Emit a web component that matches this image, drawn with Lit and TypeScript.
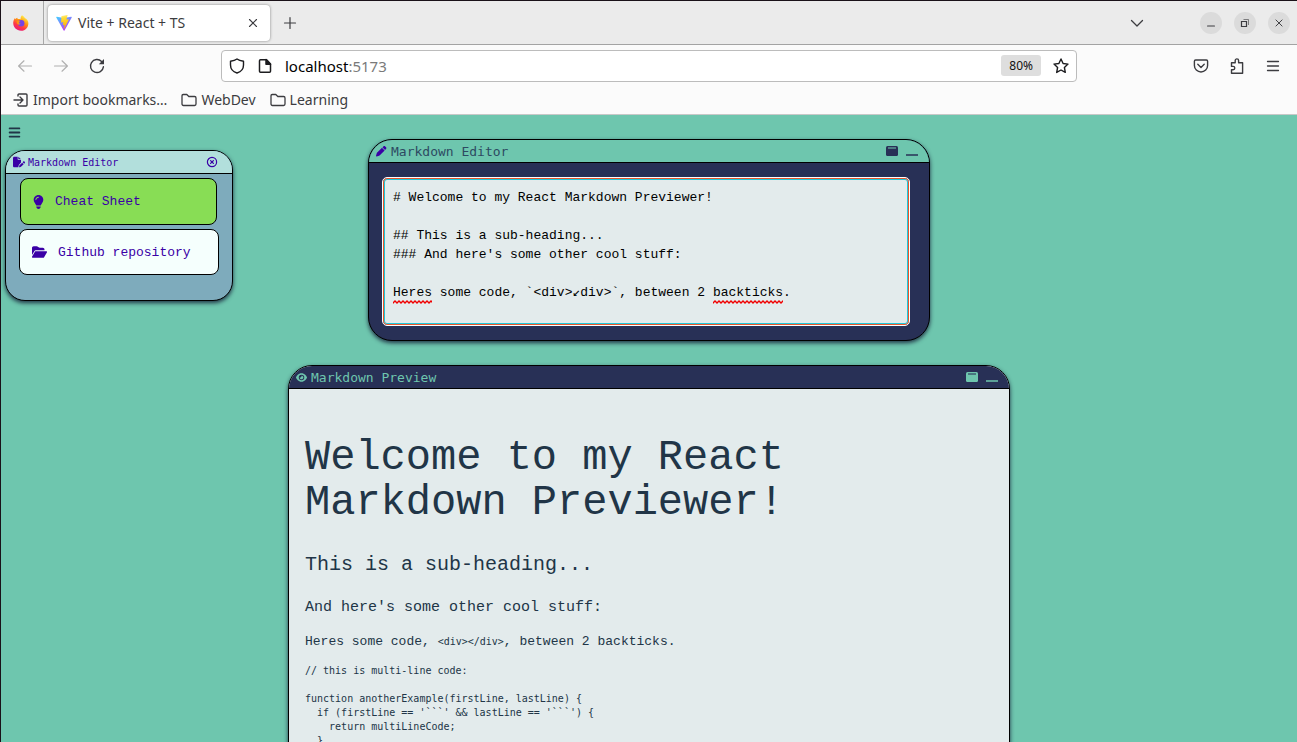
import { LitElement, html, css, svg } from "lit";
import { customElement, state } from "lit/decorators.js";

const UI = css`"Noto Sans", "Open Sans", sans-serif`;
const MONO = css`"Liberation Mono", "DejaVu Sans Mono", monospace`;
const BAR_MONO = css`"DejaVu Sans Mono", "Liberation Mono", monospace`;

const line = (d: string, box = 16, w = 1.3) => html`
  <svg viewBox="0 0 ${box} ${box}" fill="none" stroke="currentColor" stroke-width=${w}
    stroke-linecap="round" stroke-linejoin="round" aria-hidden="true"><path d=${d}></path></svg>`;
const solid = (d: string, vb: string) => html`
  <svg viewBox=${vb} fill="currentColor" aria-hidden="true"><path d=${d}></path></svg>`;

const icons = {
  close: line("M4.500 4.500l7 7M11.500 4.500l-7 7", 16, 1.1),
  plus: line("M8 2.5v11M2.5 8h11", 16, 1.2),
  chevron: line("M2.5 5.5L8 11l5.5-5.5", 16, 1.3),
  back: line("M14.500 8H1.800M7 2.800L1.600 8 7 13.200", 16, 1.2),
  forward: line("M1.500 8h12.700M9 2.800L14.400 8 9 13.200", 16, 1.2),
  reload: html`<svg viewBox="0 0 16 16" fill="none" stroke="currentColor" stroke-width="1.4" stroke-linecap="round" aria-hidden="true">
    <path d="M14.400 8.800A6.500 6.500 0 1 1 12.600 3.500L14 5"></path>
    <path d="M15 1v5.200H9.800z" fill="currentColor" stroke="none"></path></svg>`,
  shield: line("M8 1C6 2.500 3.500 3 1.500 3.300V7c0 4 2.500 6.800 6.500 8 4-1.200 6.500-4 6.500-8V3.300C12.500 3 10 2.500 8 1z", 16, 1.4),
  page: html`<svg viewBox="0 0 16 16" fill="none" stroke="currentColor" stroke-width="1.5" stroke-linejoin="round" aria-hidden="true">
    <path d="M3.500 1.800h6L13.500 6v7.200a1 1 0 0 1-1 1h-9a1 1 0 0 1-1-1V2.800a1 1 0 0 1 1-1z"></path>
    <path d="M9 1.500v4.800h4.500z" fill="currentColor"></path></svg>`,
  star: line("M8 1l2.100 4.500 4.900.600-3.600 3.400.900 4.900L8 12l-4.300 2.400.900-4.900L1 6.100l4.900-.600z", 16, 1.4),
  pocket: html`<svg viewBox="0 0 16 16" fill="none" stroke="currentColor" stroke-width="1.400" stroke-linecap="round" stroke-linejoin="round" aria-hidden="true">
    <path d="M2.600 2h10.800a1.200 1.200 0 0 1 1.200 1.200v4.200a6.600 6.600 0 0 1-13.200 0V3.200A1.200 1.200 0 0 1 2.600 2z"></path>
    <path d="M4.800 6.300L8 9.400l3.200-3.100"></path></svg>`,
  puzzle: line("M2.500 4.800h3.700V2.600a1.700 1.700 0 0 1 3.400 0v2.200h4v10.400H2.500v-3.400h1.600a1.600 1.600 0 0 0 0-3.400H2.500z", 16, 1.400),
  menu: line("M2.500 3.500h11M2.500 8h11M2.500 12.500h11", 16, 1.300),
  importIn: line("M1 8h9M7 5l3 3-3 3M5 4V3a1 1 0 0 1 1-1h7a1 1 0 0 1 1 1v10a1 1 0 0 1-1 1H6a1 1 0 0 1-1-1v-1", 16, 1.400),
  folder: line("M2.200 2.500h3.600l2 2h5.800a1.400 1.400 0 0 1 1.400 1.400v6.200a1.400 1.400 0 0 1-1.400 1.400H2.400A1.400 1.400 0 0 1 1 12.100V3.800a1.300 1.300 0 0 1 1.200-1.300z", 16, 1.300),
  bars: line("M2 3h12M2 8h12M2 13h12", 16, 2.200),
  winMin: line("M4 11.500h8", 16, 1.200),
  winRestore: html`<svg viewBox="0 0 14 14" fill="none" stroke="currentColor" aria-hidden="true">
    <path d="M3.500 5.500h5v5h-5z" stroke-width="1.200"></path><path d="M5.500 3.500h5v5.500" stroke-width="1" opacity=".6"></path></svg>`,
  pencil: solid("M410.300 231l11.300-11.300-33.900-33.900-62.100-62.100L291.700 89.800l-11.300 11.300-22.600 22.600L58.600 322.900c-10.400 10.400-18 23.300-22.200 37.400L1 480.700c-2.500 8.400-.200 17.500 6.100 23.700s15.300 8.500 23.700 6.100l120.300-35.400c14.100-4.200 27-11.800 37.400-22.200L387.700 253.700 410.300 231zM362.700 18.700L348.300 33.200 325.700 55.800 314.300 67.100l33.900 33.900 62.100 62.100 33.900 33.900 11.300-11.300 22.600-22.600 14.500-14.500c25-25 25-65.500 0-90.500L453.300 18.700c-25-25-65.500-25-90.500 0z", "0 0 540 540"),
  filePen: solid("M0 64C0 28.700 28.700 0 64 0H224V128c0 17.700 14.300 32 32 32H384V285.700l-86.800 86.800c-10.300 10.300-17.500 23.100-21 37.200l-18.700 74.900c-2.300 9.200-1.800 18.800 1.300 27.500H64c-35.300 0-64-28.700-64-64V64zm384 64H256V0L384 128zM549.800 235.700l14.400 14.400c15.600 15.600 15.600 40.900 0 56.600l-29.400 29.400-71-71 29.400-29.400c15.600-15.600 40.900-15.600 56.600 0zM311.900 417L441.100 287.800l71 71L382.900 487.900c-4.100 4.100-9.200 7-14.900 8.400l-60.100 15c-5.500 1.400-11.200-.200-15.200-4.200s-5.600-9.700-4.200-15.200l15-60.100c1.400-5.600 4.300-10.800 8.400-14.900z", "0 0 576 512"),
  bulb: solid("M272 384c9.600-31.900 29.500-59.100 49.200-86.200c5.200-7.100 10.400-14.200 15.400-21.400c19.800-28.500 31.400-63 31.400-100.300C368 78.800 289.200 0 192 0S16 78.800 16 176c0 37.300 11.600 71.900 31.400 100.300c5 7.200 10.200 14.300 15.400 21.400c19.800 27.100 39.700 54.400 49.200 86.200H272zM192 512c44.200 0 80-35.800 80-80V416H112v16c0 44.200 35.800 80 80 80zM112 176c0 8.800-7.200 16-16 16s-16-7.200-16-16c0-61.900 50.100-112 112-112c8.800 0 16 7.200 16 16s-7.200 16-16 16c-44.200 0-80 35.800-80 80z", "0 0 384 512"),
  folderOpen: solid("M88.700 223.800L0 375.800V96C0 60.700 28.700 32 64 32H181.500c17 0 33.300 6.700 45.300 18.700l26.500 26.500c12 12 28.300 18.700 45.300 18.700H416c35.300 0 64 28.700 64 64v32H144c-22.800 0-43.800 12.100-55.300 31.800zm27.600 16.100C122.100 230 132.600 224 144 224H544c11.500 0 22 6.100 27.700 16.100s5.700 22.200-.100 32.100l-112 192C453.900 474 443.400 480 432 480H32c-11.500 0-22-6.100-27.700-16.100s-5.700-22.200 .100-32.100l112-192z", "0 0 576 512"),
  eye: html`<svg viewBox="0 0 576 512" aria-hidden="true"><path fill="currentColor" fill-rule="evenodd" d="M288 32c-80.800 0-145.500 36.800-192.600 80.600C48.600 156 17.300 208 2.500 243.700c-3.300 7.900-3.300 16.700 0 24.600C17.300 304 48.600 356 95.400 399.400C142.500 443.200 207.200 480 288 480s145.500-36.800 192.600-80.600c46.800-43.500 78.100-95.400 93-131.100c3.300-7.900 3.300-16.700 0-24.600c-14.900-35.700-46.200-87.700-93-131.100C433.500 68.800 368.800 32 288 32zM144 256a144 144 0 1 1 288 0 144 144 0 1 1-288 0zm144-64c0 35.300-28.700 64-64 64c-7.100 0-13.900-1.200-20.300-3.300c-5.500-1.800-11.900 1.600-11.700 7.400c.300 6.900 1.300 13.800 3.200 20.700c13.700 51.200 66.400 81.600 117.600 67.900s81.600-66.400 67.900-117.600c-11.100-41.500-47.800-69.400-88.600-71.100c-5.800-.200-9.200 6.100-7.400 11.700c2.100 6.400 3.300 13.200 3.300 20.300z"></path></svg>`,
  maximize: html`<svg viewBox="0 0 12 12" aria-hidden="true"><rect x="0" y="1" width="12" height="10" rx="1.500" fill="currentColor"></rect><path d="M2 3h8" stroke="var(--bar)" stroke-width="1.500" opacity=".7"></path></svg>`,
  minimize: html`<svg viewBox="0 0 12 12" aria-hidden="true"><path d="M0 10h12" stroke="currentColor" stroke-width="1.500"></path></svg>`,
  circleX: html`<svg viewBox="0 0 12 12" fill="none" stroke="currentColor" stroke-width="1.200" stroke-linecap="round" aria-hidden="true"><circle cx="6" cy="6" r="4.600"></circle><path d="M4.600 4.600l2.800 2.800M7.400 4.600L4.600 7.400"></path></svg>`,
  vite: html`<svg viewBox="0 0 32 32" aria-hidden="true"><defs>
      <linearGradient id="va" x1="0" y1="0" x2=".6" y2="1"><stop offset="0" stop-color="#41d1ff"></stop><stop offset="1" stop-color="#bd34fe"></stop></linearGradient>
      <linearGradient id="vb" x1=".5" y1="0" x2=".6" y2="1"><stop offset="0" stop-color="#ffea83"></stop><stop offset=".2" stop-color="#ffdd35"></stop><stop offset="1" stop-color="#ffa800"></stop></linearGradient></defs>
    <path fill="url(#va)" d="M31.500 5L17 31a1 1 0 0 1-1.600 0L.500 5c-.400-.800.300-1.500 1.100-1.400L16 6.200l14.300-2.600c.800-.100 1.600.700 1.200 1.400z"></path>
    <path fill="url(#vb)" d="M22.500 0L11.500 2c-.400.100-.600.300-.600.600L10.200 14.500c0 .400.300.600.700.500l3.100-.700c.400-.100.800.300.700.700l-.900 4.500c-.100.500.300.800.700.700l1.900-.600c.500-.100.900.300.700.700l-1.400 6.600c-.100.700.600.900.900.400l8.800-18c.200-.400-.100-.800-.600-.700l-3.200.600c-.400.100-.700-.300-.600-.700l2.100-7.800c.100-.400-.200-.800-.600-.700z"></path></svg>`,
  firefox: html`<svg viewBox="0 0 16 16" aria-hidden="true"><defs>
      <linearGradient id="fa" x1=".8" y1="0" x2=".25" y2="1"><stop offset=".05" stop-color="#fff44f"></stop><stop offset=".4" stop-color="#ff980e"></stop><stop offset=".7" stop-color="#ff3647"></stop><stop offset="1" stop-color="#e31587"></stop></linearGradient></defs>
    <path fill="url(#fa)" d="M9 .300c1.700.900 2.500 2 3 3 1.200.300 2.200 1.300 2.900 2.600 1.700 4.400-1.300 9.800-6.800 9.900C3 15.800-.300 11.500.300 7 .500 5.300 1.200 4 2 3l.300 1.300C3 3.300 3.600 3 4.300 2.700l.400 1.400c1-.200 1.900-.200 2.900.100C7.500 2.600 8 1.200 9 .300z"></path>
    <circle cx="8.200" cy="8.300" r="3.200" fill="#7542e5"></circle>
    <path fill="#ff980e" d="M3.500 6.500c1.300-1 2.800-.700 4 .400-.900 0-1.700.300-1.800.900-.100.800 1.200.900 2 .500-.500 1.400-2.100 1.700-3.200.800z"></path></svg>`,
};

type Mark = { row: number; col: number; length: number };

@customElement("browser-chrome")
export class BrowserChrome extends LitElement {
  static styles = css`
    :host { display: block; font-family: ${UI}; font-size: 14px; line-height: 20px; color: #3c3c40; background: #fbfbfb; border-bottom: 1px solid #c8c8c8; }
    * { box-sizing: border-box; }
    svg { display: block; width: 16px; height: 16px; flex: none; }
    button { display: flex; align-items: center; justify-content: center; border: 0; padding: 0; background: none; color: inherit; font: inherit; }
    .tabs { display: flex; align-items: center; height: 44px; background: #ebebeb; border-bottom: 1px solid #a3a3a3; }
    .pinned { width: 43px; height: 43px; border-right: 1px solid #a8a8a8; padding-right: 2px; }
    .tab { display: flex; align-items: center; gap: 6px; width: 222px; height: 36px; margin-left: 4px; padding: 0 9px 0 8px; border-radius: 4px; background: #fff; box-shadow: 0 0 3px rgba(0, 0, 0, .45); }
    .tab span { flex: 1; }
    .new { width: 40px; height: 36px; }
    .space { flex: 1; }
    .list { margin-right: 55px; }
    .window { display: flex; gap: 12px; padding-right: 7px; }
    .window button { width: 22px; height: 22px; border-radius: 50%; background: #dbdbdb; }
    .window svg { width: 14px; height: 14px; }
    .nav { display: grid; grid-template-columns: 1fr minmax(0, 856px) 1fr; align-items: center; height: 41px; }
    .left { display: flex; gap: 20px; padding-left: 16px; }
    .left button:disabled { color: #b0b0b0; }
    .right { display: flex; justify-content: flex-end; gap: 20px; padding-right: 16px; }
    .address { display: flex; align-items: center; height: 32px; gap: 12px; padding: 0 7px; border: 1px solid #bcbcbc; border-radius: 4px; background: #fff; color: #1c1c1f; }
    .url { flex: 1; display: flex; min-width: 0; color: #000; font-size: 15px; }
    .url span { color: #7a7a7a; }
    .zoom { height: 21px; padding: 0 8px; border-radius: 3px; background: #dedede; color: #111; font-size: 12px; }
    .marks { display: flex; gap: 14px; height: 28px; padding: 0 12px; align-items: center; }
    .marks a { display: flex; align-items: center; gap: 4px; color: inherit; text-decoration: none; }
  `;

  render() {
    return html`
      <div class="tabs">
        <button class="pinned" aria-label="Firefox View">${icons.firefox}</button>
        <div class="tab">${icons.vite}<span>Vite + React + TS</span><button aria-label="Close tab">${icons.close}</button></div>
        <button class="new" aria-label="New tab">${icons.plus}</button>
        <div class="space"></div>
        <button class="list" aria-label="List all tabs">${icons.chevron}</button>
        <div class="window">
          <button aria-label="Minimize">${icons.winMin}</button>
          <button aria-label="Restore">${icons.winRestore}</button>
          <button aria-label="Close">${icons.close}</button>
        </div>
      </div>
      <div class="nav">
        <div class="left">
          <button disabled aria-label="Back">${icons.back}</button>
          <button disabled aria-label="Forward">${icons.forward}</button>
          <button aria-label="Reload">${icons.reload}</button>
        </div>
        <div class="address">
          ${icons.shield}${icons.page}
          <div class="url">localhost<span>:5173</span></div>
          <button class="zoom" aria-label="Reset zoom level">80%</button>
          <button aria-label="Bookmark this page">${icons.star}</button>
        </div>
        <div class="right">
          <button aria-label="Save to Pocket">${icons.pocket}</button>
          <button aria-label="Extensions">${icons.puzzle}</button>
          <button aria-label="Open menu">${icons.menu}</button>
        </div>
      </div>
      <nav class="marks">
        <a href="#import">${icons.importIn}Import bookmarks…</a>
        <a href="#webdev">${icons.folder}WebDev</a>
        <a href="#learning">${icons.folder}Learning</a>
      </nav>`;
  }
}

@customElement("side-menu")
export class SideMenu extends LitElement {
  static styles = css`
    :host { display: block; padding: 10px 4px; font-family: ${MONO}; color: #3a00a6; }
    * { box-sizing: border-box; }
    svg { display: block; flex: none; }
    button { display: flex; border: 0; padding: 0; background: none; color: inherit; }
    .toggle { color: #213547; padding: 1px 3px; margin-bottom: 10px; }
    .toggle svg { width: 13px; height: 13px; }
    .card { width: 228px; height: 151px; border: 1px solid #000; border-radius: 20px; background: #7eabbc; overflow: hidden; box-shadow: 0 2px 4px #213547; }
    .bar { display: flex; align-items: center; gap: 3px; height: 23px; padding: 0 14px 0 7px; border-bottom: 1px solid #000; background: #b2dfdc; font-family: ${BAR_MONO}; font-size: 10px; }
    .bar span { flex: 1; }
    .bar svg { width: 12px; height: 12px; }
    .links { display: flex; flex-direction: column; gap: 4px; padding: 4px 13px; }
    .link { display: flex; align-items: center; height: 46px; padding: 0 12px; gap: 11px; border: 1px solid #000; border-radius: 8px; background: #f5fffd; color: inherit; font-size: 13px; text-decoration: none; }
    .link svg { width: 15px; height: 14px; }
    .accent { margin: 0 2px 0 1px; gap: 9px; padding: 0 10px; height: 47px; background: #88dd55; }
  `;

  render() {
    return html`
      <button class="toggle" aria-label="Toggle menu">${icons.bars}</button>
      <aside class="card">
        <div class="bar">${icons.filePen}<span>Markdown Editor</span><button aria-label="Close menu">${icons.circleX}</button></div>
        <nav class="links">
          <a class="link accent" href="#cheat-sheet">${icons.bulb}Cheat Sheet</a>
          <a class="link" href="#repository">${icons.folderOpen}Github repository</a>
        </nav>
      </aside>`;
  }
}

@customElement("tool-window")
export class ToolWindow extends LitElement {
  static properties = { heading: {}, icon: {}, dark: { type: Boolean, reflect: true } };
  declare heading: string;
  declare icon: "pencil" | "eye";
  declare dark: boolean;

  static styles = css`
    :host { display: block; --bar: #6ec6ae; --ink: #283056; --body: #283056; border: 1px solid #000; border-radius: 24px; background: var(--body); overflow: hidden; box-shadow: 0 2px 4px #213547; font-family: ${MONO}; }
    :host([dark]) { --bar: #283056; --ink: #6ec6ae; --body: #e3ebec; border-radius: 24px 24px 0 0; }
    header { display: flex; align-items: center; gap: 4px; height: 23px; box-sizing: border-box; padding: 0 11px 0 7px; background: var(--bar); border-bottom: 1px solid #000; color: var(--ink); font-family: ${BAR_MONO}; font-size: 13px; }
    h2 { flex: 1; margin: 0; font: inherit; }
    header svg { display: block; width: 11px; height: 11px; }
    :host(:not([dark])) .glyph { color: #3a00a6; }
    :host(:not([dark])) h2 { color: #2d4a62; }
    button { display: flex; border: 0; padding: 0; margin-left: 4px; background: none; color: inherit; }
    header button svg { width: 12px; height: 12px; }
  `;

  render() {
    return html`
      <header>
        <span class="glyph">${icons[this.icon]}</span>
        <h2>${this.heading}</h2>
        <button aria-label="Maximize">${icons.maximize}</button>
        <button aria-label="Minimize">${icons.minimize}</button>
      </header>
      <slot></slot>`;
  }
}

const SOURCE = `# Welcome to my React Markdown Previewer!

## This is a sub-heading...
### And here's some other cool stuff:

Heres some code, \`<div>↙div>\`, between 2 backticks.`;

const MARKS: Mark[] = [
  { row: 5, col: 0, length: 5 },
  { row: 5, col: 41, length: 9 },
];

const CODE = `// this is multi-line code:

function anotherExample(firstLine, lastLine) {
  if (firstLine == '\`\`\`' && lastLine == '\`\`\`') {
    return multiLineCode;
  }
}`;

@customElement("app-root")
export class AppRoot extends LitElement {
  @state() private text = SOURCE;

  static styles = css`
    :host { display: flex; flex-direction: column; height: 100vh; box-sizing: border-box; overflow: hidden; border: solid #1a1118; border-width: 1px 0 0 1px; background: #6ec6ae; }
    * { box-sizing: border-box; }
    main { flex: 1; min-height: 0; overflow: hidden; display: grid; grid-template-columns: 1fr minmax(0, 722px) 1fr; align-items: start; font-family: ${MONO}; color: #213547; }
    .column { display: flex; flex-direction: column; gap: 24px; padding-top: 24px; }
    .editor { width: 100%; max-width: 562px; align-self: center; }
    .field { position: relative; margin: 15px 20px 15px 14px; font-size: 13px; line-height: 19px; }
    textarea { display: block; width: 100%; height: 147px; margin: 0; padding: 9px; border: 1px solid #e8552b; border-radius: 4px; outline: 1px solid #fff; box-shadow: inset 0 0 0 1px #1fc8db; background: #e3ebec; color: #000; font: inherit; resize: none; overflow: hidden; }
    .marks { position: absolute; inset: 10px; pointer-events: none; }
    .mark { position: absolute; height: 4px; }
    .preview { padding: 0 16px; }
    h1, h2, h3 { font-weight: 400; margin: 0; }
    h1 { font-size: 42px; line-height: 45px; margin-top: 47px; }
    h2 { font-size: 20px; line-height: 28px; margin-top: 25px; }
    h3 { font-size: 15px; line-height: 22px; margin-top: 18px; }
    p { font-size: 13px; line-height: 20px; margin: 13px 0 12px; }
    code, pre { font-family: "DejaVu Sans Mono", monospace; font-size: 10px; }
    pre { margin: 0; line-height: 14px; }
  `;

  private renderMark(m: Mark) {
    return html`<svg class="mark" aria-hidden="true" style="left:${m.col}ch;top:${m.row * 19 + 17}px;width:${m.length}ch">
      <defs><pattern id="wave${m.col}" width="4" height="4" patternUnits="userSpaceOnUse">
        ${svg`<path d="M-1 2L0 3L2 1L4 3L5 2" fill="none" stroke="#f00000" stroke-width="1.300"></path>`}
      </pattern></defs>
      <rect width="100%" height="4" fill="url(#wave${m.col})"></rect>
    </svg>`;
  }

  render() {
    return html`
      <browser-chrome></browser-chrome>
      <main>
        <side-menu></side-menu>
        <div class="column">
          <tool-window class="editor" heading="Markdown Editor" icon="pencil">
            <div class="field">
              <textarea aria-label="Markdown source" spellcheck="false" .value=${this.text}
                @input=${(e: Event) => (this.text = (e.target as HTMLTextAreaElement).value)}></textarea>
              <div class="marks">${this.text === SOURCE ? MARKS.map((m) => this.renderMark(m)) : null}</div>
            </div>
          </tool-window>
          <tool-window heading="Markdown Preview" icon="eye" dark>
            <article class="preview">
              <h1>Welcome to my React Markdown Previewer!</h1>
              <h2>This is a sub-heading...</h2>
              <h3>And here's some other cool stuff:</h3>
              <p>Heres some code, <code>&lt;div&gt;&lt;/div&gt;</code>, between 2 backticks.</p>
              <pre>${CODE}</pre>
            </article>
          </tool-window>
        </div>
      </main>`;
  }
}
